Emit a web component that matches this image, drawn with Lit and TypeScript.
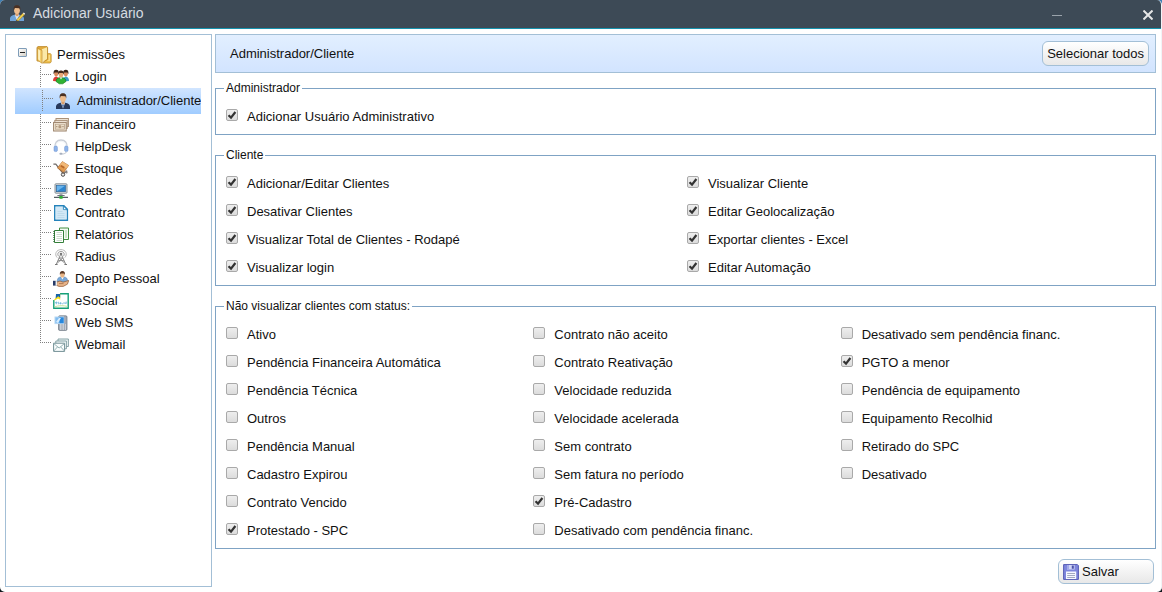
import { LitElement, html, svg, css, nothing } from "lit";
import { customElement, property, state } from "lit/decorators.js";
import { classMap } from "lit/directives/class-map.js";

const suit = (shirt: string, lapel: string) => svg`
  <path d="M1 16v-2.5C1.2 11 3 10.6 5.6 9.8h4.8c2.6.8 4.4 1.2 4.6 3.7V16z" fill=${shirt}/>
  <path d="M5.8 9.6 8 15.6l2.2-6z" fill="#f4f6fa"/>
  <path d="M8 11l-.9 1 .9 3.6.9-3.6z" fill=${lapel}/>
  <path d="M6.4 8h3.2v2.4L8 11.6l-1.6-1.2z" fill="#d99d6c"/>
  <ellipse cx="8" cy="5.2" rx="2.9" ry="3.8" fill="#efbd8d"/>
  <path d="M4.8 5.4C4.2 1.8 5.4.2 8 .2s3.8 1.6 3.2 5.2L10.4 3.2 5.8 3z" fill="#4a3022"/>`;

const icons: Record<string, unknown> = {
  userEdit: svg`${suit("#6fa3d8", "#c9dcf2")}
    <path d="M7.6 14.8 13.8 8.2l1.7 1.5-6.2 6.3-2 .2z" fill="#f3d24d" stroke="#8d6b1c" stroke-width=".5"/>
    <path d="m13.8 8.2 1-.8 1.3 1.3-.7 1z" fill="#f7f2ea"/><path d="m7.3 16.2.3-1.4 1 1z" fill="#333"/>`,
  folder: svg`
    <path d="M1 1.5 2 .6h9l.6 1V15H1z" fill="#e3ab3c" stroke="#b98426" stroke-width=".8"/>
    <path d="M5.800 3.200 11 1.200V13l-5.200 3.600z" fill="#fbe9a8"/>
    <path d="M1.400 2 6 4.400v12.800L1.400 14.200z" fill="#f6d271" stroke="#c39130" stroke-width=".7"/>
    <path d="M2.200 3.600 4 4.600v9.800l-1.800-1.200z" fill="#fdf0bd"/>
    <path d="M11.600 7.600h2.800l.8 1v7.200l-1 1.200H6.400l5.200-3.600z" fill="#efc04f" stroke="#bc8a29" stroke-width=".7"/>
    <path d="M12.600 9h1.400v6h-3l1.600-1.200z" fill="#f9dd8a"/>`,
  group: svg`
    <path d="M0 12c0-3 1-4 3.200-4.600L6 9v3.600z" fill="#dd3b35"/>
    <path d="M16 12c0-3-1-4-3.200-4.600L10 9v3.600z" fill="#3b9dc6"/>
    <ellipse cx="3.200" cy="4.600" rx="2.100" ry="2.800" fill="#d98d5f"/><path d="M.6 5.200C.2 2.200 1.200.8 3.200.8s3 1.400 2.600 4.400L4.800 3.600H1.600z" fill="#3a241a"/>
    <ellipse cx="12.800" cy="4.600" rx="2.100" ry="2.800" fill="#d98d5f"/><path d="M10.200 5.200C9.800 2.200 10.800.8 12.800.8s3 1.400 2.600 4.400l-1-1.600h-3.200z" fill="#3a241a"/>
    <path d="M3 12.400c.2-2.200 1.200-3.200 3.200-3.600h3.600c2 .4 3 1.400 3.200 3.600L9.800 14.800H6.200z" fill="#2eb234" stroke="#16791d" stroke-width=".6"/>
    <path d="m6.800 8.600 1.200 2 1.200-2z" fill="#fff"/>
    <ellipse cx="8" cy="5.600" rx="2.200" ry="3" fill="#e9a877"/><path d="M5.400 5.800C5 2.400 6 1.400 8 1.400s3 1 2.600 4.400L9.800 4.100H6.200z" fill="#4a2c1d"/>`,
  admin: suit("#28395c", "#345b9c"),
  money: svg`
    <rect x="3" y="1.5" width="12.4" height="8" fill="#f5ede0" stroke="#a99078"/>
    <rect x="1.8" y="3.4" width="12.4" height="8" fill="#f5ede0" stroke="#a99078"/>
    <rect x=".6" y="5.4" width="12.6" height="8.6" fill="#f6eddd" stroke="#9a8069"/>
    <rect x="2.3" y="7.2" width="9.2" height="5" fill="#ede0cb" stroke="#b7a28b" stroke-width=".8"/>
    <circle cx="6.9" cy="9.7" r="1.6" fill="#b49b80"/><path d="M3.2 9.7h1.2m5 0h1.2" stroke="#93785d"/>`,
  headset: svg`
    <path d="M2 9C1.4 3.6 4 1 8 1s6.600 2.600 6 8" fill="none" stroke="#c9ced6" stroke-width="1.300"/>
    <path d="M3 7.200C3.200 4 5 2.400 8 2.400s4.800 1.600 5 4.800" fill="none" stroke="#eef1f5" stroke-width=".8"/>
    <rect x="1" y="7" width="3.400" height="5.600" rx="1.400" fill="#8fb4ea" stroke="#6d93cf" stroke-width=".5"/>
    <rect x="11.600" y="7" width="3.400" height="5.600" rx="1.400" fill="#8fb4ea" stroke="#6d93cf" stroke-width=".5"/>
    <path d="M13.600 12.800C12.800 14.400 11 15 8.800 15" fill="none" stroke="#bcc3cd"/><rect x="6.400" y="13.800" width="3" height="2" rx="1" fill="#a7b0bf"/>`,
  box: svg`
    <path d="M.4 3.200h2.400l7.600 9.600 3.800-3" fill="none" stroke="#6f6a67" stroke-width="1.200"/>
    <path d="M9.400.6 15.600 4.400 11 11.200 4.400 7z" fill="#e29b50" stroke="#a2612a" stroke-width=".6"/>
    <path d="m9.400.6 6.200 3.800-2.200 3.200L7 3.800z" fill="#f1b877"/>
    <path d="m8.400 4 3.400 2-1 1.600-3.400-2z" fill="#b8682a"/><path d="M5 7.600l5.800 3.800.4 1.600z" fill="#b06e33"/>
    <circle cx="10" cy="13.600" r="1.700" fill="#eee" stroke="#4e4a48"/><circle cx="13.600" cy="11.400" r="1" fill="#8b8786"/>`,
  network: svg`
    <rect x="2" y=".8" width="12" height="9.400" rx=".8" fill="#d8dde1" stroke="#6d7880" stroke-width=".8"/>
    <rect x="3.500" y="2.300" width="9" height="6.400" fill="#2b84cf" stroke="#285f91" stroke-width=".6"/>
    <path d="M4 2.800h8L4 8.200z" fill="#69b4ed"/>
    <path d="M6.500 10.200h3V12h-3z" fill="#a0a6ab"/><path d="M4.400 12h7.200v1H4.400z" fill="#68717a"/>
    <path d="M1 14.400h14" stroke="#555e63" stroke-width="1.200"/><rect x="6.200" y="13" width="3.600" height="2.800" rx=".8" fill="#2faf34"/>`,
  contract: svg`
    <path d="M1.700.7h9.200l3.500 3.500v11.100H1.700z" fill="#fff" stroke="#2583bb" stroke-width="1.400"/>
    <path d="M3 2h7v3.400h3.200V14H3z" fill="#d2e8f6"/>
    <path d="M10.400 1v3.700H14z" fill="#fff" stroke="#2583bb" stroke-width=".9"/>
    <path d="M4.500 6.500h5M4.500 8.500h7m-7 2h7m-7 2h7" stroke="#bcd9ea" stroke-width=".9"/>`,
  report: svg`
    <path d="M6.500 1h9v11.500h-9z" fill="#f6fbf4" stroke="#428f41"/>
    <path d="M12 3h2v8h-2z" fill="#cce4ca"/>
    <path d="M1.500 3.500h9v12h-9z" fill="#fff" stroke="#34803a"/>
    <path d="M3.500 5.500h5.500m-5.500 2h5.500m-5.500 2h5.500m-5.500 2h5.500m-5.500 2h5.500" stroke="#ccdacd"/>
    <path d="M1 4v11" stroke="#225f2b" stroke-width="1.200" stroke-dasharray="1 1"/>`,
  antenna: svg`
    <path d="M4.200 8.600C1 5.200 3.400.6 8 .6s7 4.600 3.800 8" fill="none" stroke="#b5b5b5"/>
    <path d="M5.600 7.200C3.800 4.800 5.400 2.500 8 2.500s4.200 2.300 2.400 4.700" fill="none" stroke="#969696"/>
    <circle cx="8" cy="5" r="1.300" fill="#747474"/>
    <path d="M7.600 5.500 3.200 15.500M8.400 5.500l4.400 10M6.200 9h3.600M5.200 11.600h5.600M6.200 9l5.400 5M9.800 9l-5.400 5" fill="none" stroke="#888"/>
    <path d="M2 15.500h2.600m6.800 0H14" stroke="#777"/>`,
  person: svg`
    <path d="M4.200 11c0-3.800 1.200-4.600 3.400-5h3.600c2.200.4 3.400 1.200 3.400 5z" fill="#78a8d9" stroke="#4d78a8" stroke-width=".5"/>
    <path d="m8 6 1.400 2.400L10.800 6z" fill="#fff"/>
    <ellipse cx="9.400" cy="3.800" rx="2.200" ry="2.800" fill="#e9b484"/><path d="M6.900 4C6.500 1.200 7.600.1 9.400.1S12.300 1.200 11.900 4l-.8-1.500H7.700z" fill="#5b3925"/>
    <path d="M3.600 11.200 7 10l3 1.200 5.800-1.800-1.400 3.800-4.200 2.200H6l-2.400-1z" fill="#e8b489" stroke="#8f5935" stroke-width=".7"/>
    <path d="M6 12.600h4.500" stroke="#a56c43" stroke-width=".8"/>
    <path d="M0 9.800h2.800v4.800H0z" fill="#263a68"/><path d="M2.800 10.200h1.200v4.200H2.800z" fill="#fff" stroke="#aaa" stroke-width=".3"/>`,
  esocial: svg`
    <path d="M7 .8h8.200v14.400H.8V7" fill="#fff" stroke="#16a078" stroke-width="1.400"/>
    <path d="M.6 7.200 7.200.2v6.600L5 5.400 2 7.200z" fill="#f8e016"/>
    <path d="M3 .9h4.200v3.900L5.200 3.200 2.600 5.400z" fill="#1763a8"/>
    <path d="M2.500 9.800c.4-1.200 1.500-1 1.500 0H2.700c.2 1 1 1 1.400.6M6 9.200c-1.600 0-1 .7-.4 1 .5.400.2.700-.7.600m2-1h1.200v1H6.900zm2.200 1h1.100m.8-1.600v1.600m1.300-1.200v1.200m.9-2.200v2.200" fill="none" stroke="#5aacd6" stroke-width=".8"/>
    <path d="M1.600 13.800c4-1.400 9-1.400 12.800-.4" stroke="#c8e49a" fill="none"/>`,
  mobile: svg`
    <rect x="5.500" y=".8" width="8.500" height="14.600" rx="1.200" fill="#a3abb7" stroke="#68727e" stroke-width=".7"/>
    <rect x="2" y="2" width="8.600" height="6.600" fill="#81bdf0" stroke="#b6d8f4"/>
    <path d="M6.500 2.400h4.200v5.800H6.500z" fill="#2888dd"/><path d="m3 7 3-4h2L5 8z" fill="#d7edff"/>
    <path d="M7 10h1.500m1 0H11m1 0h1M7 12h1.500m1 0H11m1 0h1M7 14h1.500m1 0H11m1 0h1" stroke="#eef1f4" stroke-width="1.100"/>`,
  mail: svg`
    <path d="M5 2h10.400v7.500H5z" fill="#eef6f6" stroke="#7c9a9e" stroke-width=".9"/>
    <path d="M2.800 4h10.600v7.800H2.800z" fill="#f3f9f9" stroke="#7c9a9e" stroke-width=".9"/>
    <path d="M.6 6.200h11v8.200H.6z" fill="#fafdfd" stroke="#718f94"/>
    <path d="m.8 6.600 5.300 4.400 5.300-4.400M.8 14l3.800-4.200m6.800 4.200L7.600 9.800" fill="none" stroke="#8cabae" stroke-width=".9"/>`,
  disk: svg`
    <path d="M.6.6h13.800l1 1v13.800H.6z" fill="#7e86dc" stroke="#555bb4"/>
    <path d="M4 1h7.600v4.600H4z" fill="#cfd4f6"/><path d="M8.800 1.400h2v3.400h-2z" fill="#4a50a8"/><path d="M4 1h2v4.600H4z" fill="#a3aae9"/>
    <path d="M3 7.600h10.200V15H3z" fill="#f5f7ff"/><path d="M4.200 9.500h7.800m-7.800 2h7.800m-7.800 2h7.800" stroke="#a3a9c0"/>`,
};

const icon = (name: string, height = 16) => html`<svg
  class="icon" width="16" height=${height} viewBox="0 0 16 ${height}" aria-hidden="true">${icons[name]}</svg>`;

interface Option { label: string; on?: boolean }
const on = (label: string): Option => ({ label, on: true });
const off = (label: string): Option => ({ label });

const modules = [
  ["group", "Login"], ["admin", "Administrador/Cliente"], ["money", "Financeiro"],
  ["headset", "HelpDesk"], ["box", "Estoque"], ["network", "Redes"], ["contract", "Contrato"],
  ["report", "Relatórios"], ["antenna", "Radius"], ["person", "Depto Pessoal"],
  ["esocial", "eSocial"], ["mobile", "Web SMS"], ["mail", "Webmail"],
];

const groups: { title: string; columns: Option[][] }[] = [
  { title: "Administrador", columns: [[on("Adicionar Usuário Administrativo")]] },
  {
    title: "Cliente",
    columns: [
      [on("Adicionar/Editar Clientes"), on("Desativar Clientes"), on("Visualizar Total de Clientes - Rodapé"), on("Visualizar login")],
      [on("Visualizar Cliente"), on("Editar Geolocalização"), on("Exportar clientes - Excel"), on("Editar Automação")],
    ],
  },
  {
    title: "Não visualizar clientes com status:",
    columns: [
      [off("Ativo"), off("Pendência Financeira Automática"), off("Pendência Técnica"), off("Outros"),
        off("Pendência Manual"), off("Cadastro Expirou"), off("Contrato Vencido"), on("Protestado - SPC")],
      [off("Contrato não aceito"), off("Contrato Reativação"), off("Velocidade reduzida"), off("Velocidade acelerada"),
        off("Sem contrato"), off("Sem fatura no período"), on("Pré-Cadastro"), off("Desativado com pendência financ.")],
      [off("Desativado sem pendência financ."), on("PGTO a menor"), off("Pendência de equipamento"),
        off("Equipamento Recolhid"), off("Retirado do SPC"), off("Desativado")],
    ],
  },
];

@customElement("permission-tree")
export class PermissionTree extends LitElement {
  @property() selected = "";
  @state() private open = true;

  static styles = css`
    :host { display: block; box-sizing: border-box; border: 1px solid #a3bfd6; padding: 9px 10px 9px 9px; overflow: hidden; }
    ul { list-style: none; margin: 0; padding: 0; }
    .icon { display: block; flex: none; }
    .root { display: flex; align-items: center; height: 22px; padding-left: 3px; }
    .toggle { box-sizing: border-box; width: 9px; height: 9px; padding: 0; margin: 0 9px 5px 0; border: 1px solid #7f9db9; border-radius: 1px;
      background: linear-gradient(#222, #222) center / 5px 1px no-repeat, linear-gradient(135deg, #fff, #d5d0c6); }
    .root-name { margin-left: 5px; }
    .item.active { padding: 2px 0 2px 2px; background: linear-gradient(#d1e5ff, #a0ccff); }
    .link { display: flex; align-items: center; gap: 6px; height: 22px; padding-left: 38px; color: inherit;
      text-decoration: none; white-space: nowrap; overflow: hidden;
      background:
        repeating-linear-gradient(#808080 0 1px, transparent 1px 2px) 25px 0 / 1px 22px no-repeat,
        repeating-linear-gradient(90deg, #808080 0 1px, transparent 1px 2px) 25px 8px / 11px 1px no-repeat; }
    .item:last-child .link { background-size: 1px 9px, 11px 1px; }
  `;

  private pick(e: Event, name: string) {
    e.preventDefault();
    this.dispatchEvent(new CustomEvent("pick", { detail: name }));
  }

  render() {
    return html`
      <div class="root">
        <button class="toggle" aria-label="Permissões" aria-expanded=${this.open} @click=${() => (this.open = !this.open)}></button>
        ${icon("folder", 18)}<span class="root-name">Permissões</span>
      </div>
      ${this.open ? html`<ul>
        ${modules.map(([glyph, name]) => html`
          <li class=${classMap({ item: true, active: name === this.selected })}>
            <a class="link" href="#" @click=${(e: Event) => this.pick(e, name)}>${icon(glyph)}<span>${name}</span></a>
          </li>`)}
      </ul>` : nothing}`;
  }
}

@customElement("option-group")
export class OptionGroup extends LitElement {
  @property() heading = "";
  @property({ attribute: false }) columns: Option[][] = [];

  static styles = css`
    :host { display: block; }
    .group { margin: 0; min-width: 0; border: 1px solid #7fa3c4; padding: 8px 7px 3px 8px; }
    .legend { padding: 0 2px; font-size: 12px; line-height: 14px; }
    .columns { display: grid; grid-auto-flow: column; grid-auto-columns: minmax(0, 1fr); padding-left: 2px; }
    .option { display: flex; align-items: center; height: 28px; gap: 9px; }
    .box { appearance: none; flex: none; box-sizing: border-box; width: 12px; height: 12px; margin: 0 0 4px; border: 1px solid #a9a9a9;
      border-radius: 2px; background: linear-gradient(#eee, #dcdcdc); }
    .box:checked { background:
      url("data:image/svg+xml,%3Csvg xmlns='http://www.w3.org/2000/svg' viewBox='0 0 10 10'%3E%3Cpath d='M1.500 5.300 4 7.600 8.400 2' fill='none' stroke='%23333' stroke-width='2.200'/%3E%3C/svg%3E") center / 10px 10px no-repeat,
      linear-gradient(#eee, #dcdcdc); }
  `;

  render() {
    return html`<fieldset class="group">
      <legend class="legend">${this.heading}</legend>
      <div class="columns">
        ${this.columns.map((list, c) => html`<div>
          ${list.map((o, r) => html`<div class="option">
            <input class="box" type="checkbox" id="o${c}-${r}" .checked=${!!o.on} @change=${(e: Event) => {
              o.on = (e.target as HTMLInputElement).checked;
            }}><label for="o${c}-${r}">${o.label}</label>
          </div>`)}
        </div>`)}
      </div>
    </fieldset>`;
  }
}

@customElement("app-root")
export class AppRoot extends LitElement {
  @state() private selected = "Administrador/Cliente";
  @state() private data = groups;

  static styles = css`
    :host { display: block; background: linear-gradient(#3e7fb5 50%, #10181d 50%); color: #111;
      font: 13px/16px "Liberation Sans", Arial, sans-serif; }
    .window { display: flex; flex-direction: column; box-sizing: border-box; min-height: 100vh; background: #fff;
      border-right: 1px solid #f1f4f7; border-radius: 5px; overflow: hidden; }
    .title-bar { display: flex; align-items: center; box-sizing: border-box; height: 29px; padding: 0 8px 2px 9px;
      background: #3d4a56; border-bottom: 1px solid #1793ad; color: #d6dce1; }
    .title { flex: 1; margin: 0 0 0 8px; font-size: 14px; font-weight: normal; }
    .icon { display: block; flex: none; }
    .control { padding: 0; border: 0; background: none; }
    .control + .control { margin-left: 81px; }
    .control svg { display: block; margin-top: 4px; }
    .body { flex: 1; display: grid; grid-template-columns: 207px minmax(0, 1fr); gap: 3px; padding: 5px; }
    .bar { display: flex; align-items: center; justify-content: space-between; box-sizing: border-box; height: 39px;
      margin-bottom: 8px; padding: 0 6px 0 14px; border: 1px solid #a3bfd6; background: linear-gradient(#e2efff, #d2e4ff); }
    .heading { margin: 0; font-size: 13px; font-weight: normal; }
    .groups { display: flex; flex-direction: column; gap: 13px; }
    .button { box-sizing: border-box; height: 25px; padding: 0 4px; border: 1px solid #a3bfd6; border-radius: 6px;
      background: linear-gradient(#fff, #e8e8e8); color: inherit; font: inherit; white-space: nowrap; }
    .save { display: flex; align-items: center; gap: 3px; width: 96px; }
    .footer { display: flex; justify-content: flex-end; padding: 10px 2px 0; }
  `;

  private selectAll() {
    this.data = this.data.map((g) => ({ ...g, columns: g.columns.map((c) => c.map((o) => on(o.label))) }));
  }

  render() {
    return html`<div class="window">
      <header class="title-bar">
        ${icon("userEdit")}
        <h1 class="title">Adicionar Usuário</h1>
        <button class="control" aria-label="Minimizar"><svg width="10" height="10"><path d="M0 5.500h10" stroke="#9aa3ab"/></svg></button>
        <button class="control" aria-label="Fechar"><svg width="10" height="10"><path d="M.5.5l9 9m0-9-9 9" stroke="#e6e6e6" stroke-width="2"/></svg></button>
      </header>
      <div class="body">
        <permission-tree .selected=${this.selected} @pick=${(e: CustomEvent) => (this.selected = e.detail)}></permission-tree>
        <main>
          <div class="bar">
            <h2 class="heading">${this.selected}</h2>
            <button class="button" @click=${this.selectAll}>Selecionar todos</button>
          </div>
          <div class="groups">
            ${this.data.map((g) => html`<option-group .heading=${g.title} .columns=${g.columns}></option-group>`)}
          </div>
          <div class="footer"><button class="button save">${icon("disk")}Salvar</button></div>
        </main>
      </div>
    </div>`;
  }
}
